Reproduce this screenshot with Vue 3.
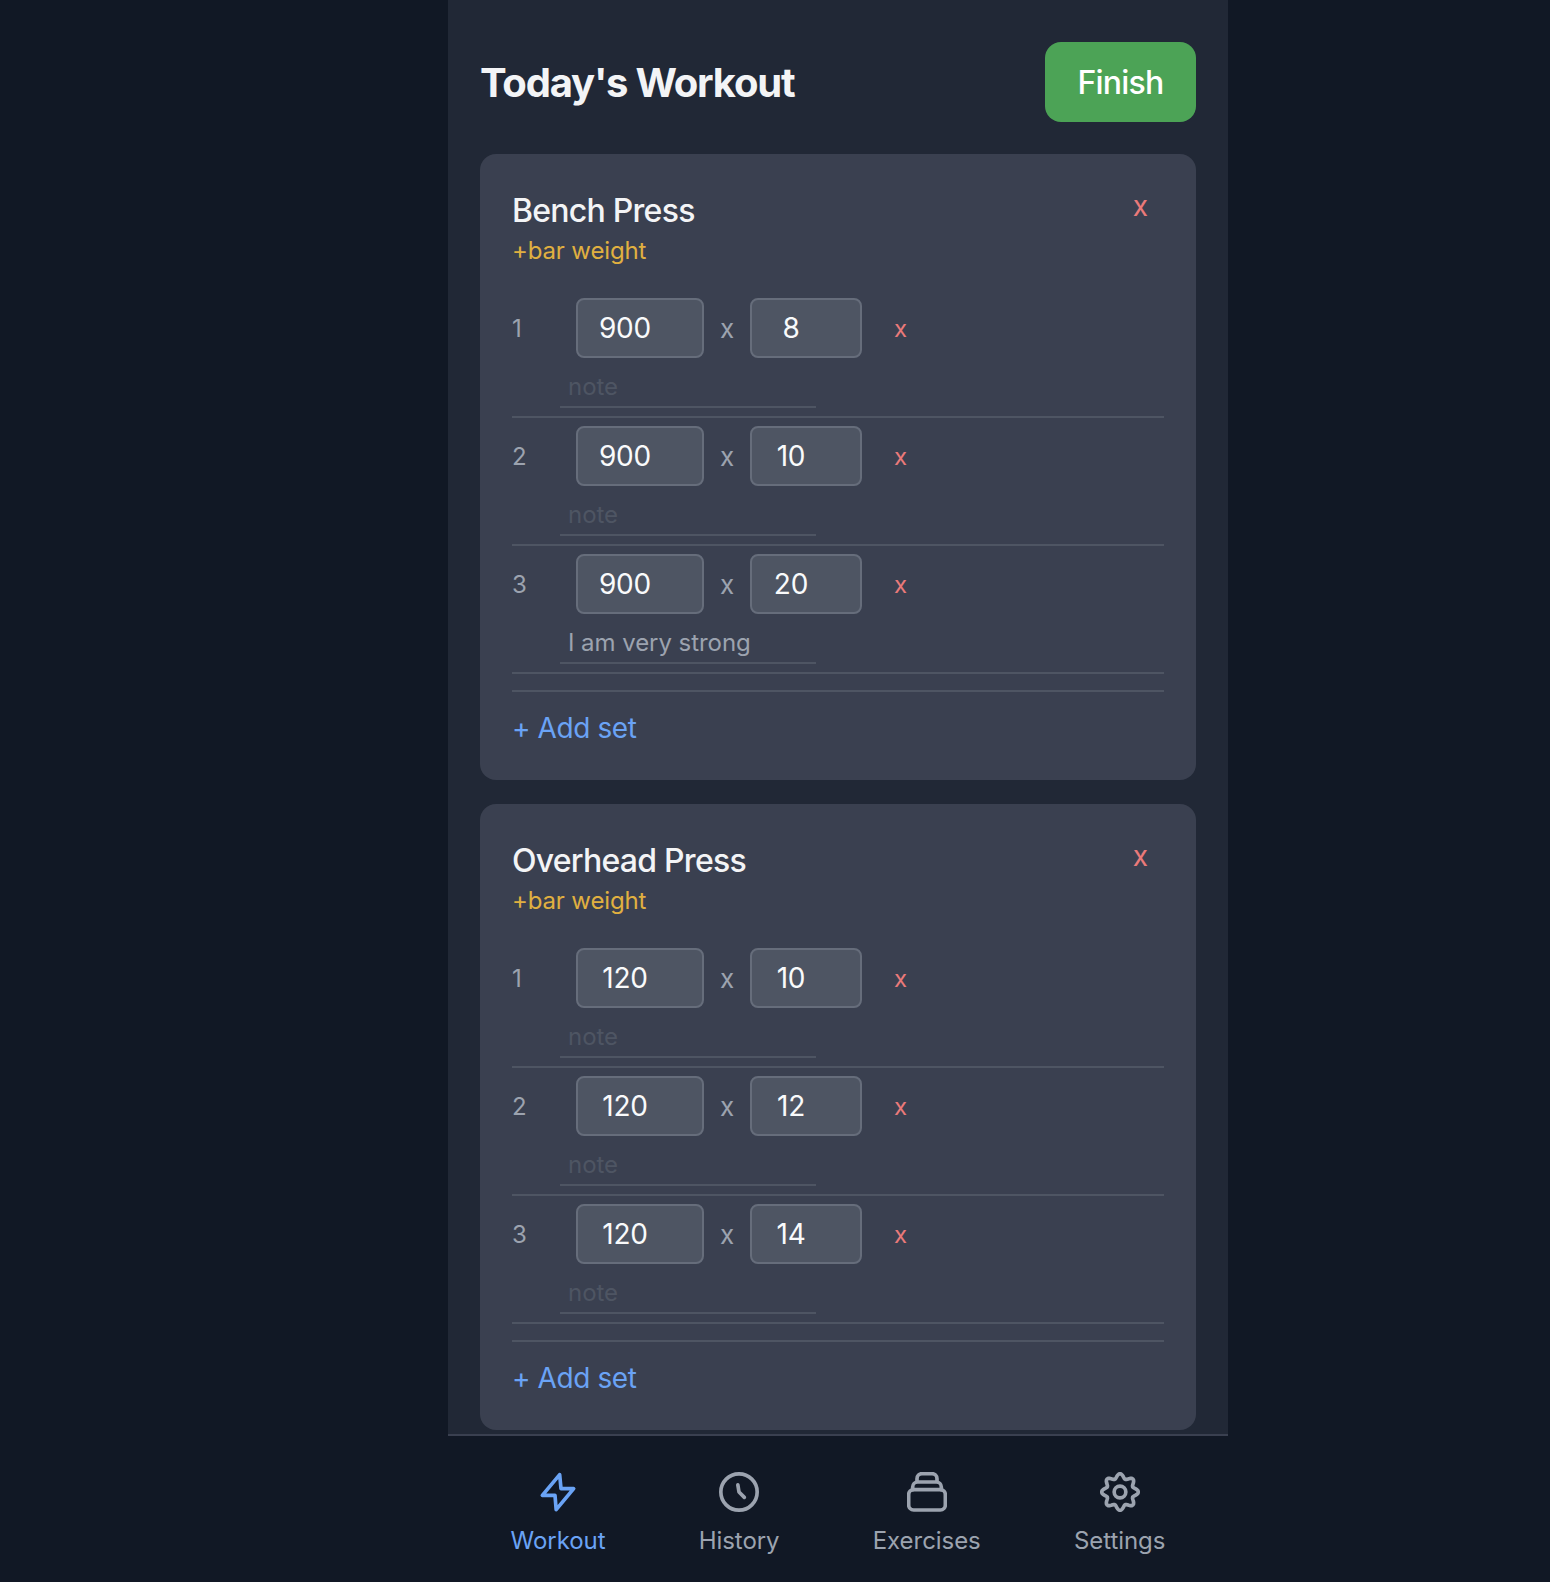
<script setup>
const exercises = [
  { name: 'Bench Press', sets: [
    { w: '900', r: '8', note: '' }, { w: '900', r: '10', note: '' }, { w: '900', r: '20', note: 'I am very strong' } ] },
  { name: 'Overhead Press', sets: [
    { w: '120', r: '10', note: '' }, { w: '120', r: '12', note: '' }, { w: '120', r: '14', note: '' } ] },
]
const gear = (() => {
  const pts = []
  for (let i = 0; i < 96; i++) {
    const t = (i / 96) * Math.PI * 2
    const r = 9.6 + 1.4 * Math.cos(8 * t)
    pts.push(`${(12 + r * Math.sin(t)).toFixed(2)} ${(12 - r * Math.cos(t)).toFixed(2)}`)
  }
  return 'M' + pts.join('L') + 'Z'
})()
</script>

<template>
  <div class="page">
    <div class="phone">
      <main class="content">
        <header class="head">
          <h1>Today's Workout</h1>
          <button class="finish">Finish</button>
        </header>
        <section v-for="ex in exercises" :key="ex.name" class="card">
          <div class="card-head">
            <div>
              <h2>{{ ex.name }}</h2>
              <div class="bar">+bar weight</div>
            </div>
            <button class="remove-ex">x</button>
          </div>
          <div v-for="(s, i) in ex.sets" :key="i" class="set">
            <div class="line">
              <span class="num">{{ i + 1 }}</span>
              <input class="field w" :value="s.w" />
              <span class="times">x</span>
              <input class="field r" :value="s.r" />
              <button class="remove-set">x</button>
            </div>
            <input class="note" placeholder="note" :value="s.note" />
          </div>
          <div class="add"><button class="add-btn">+ Add set</button></div>
        </section>
      </main>
      <nav class="nav">
        <a class="tab active">
          <svg viewBox="0 0 24 24" class="ico"><path d="M13 1.6 2.6 14h7.6l.7 8.6L21.4 10h-7.6z"/></svg>
          <span>Workout</span>
        </a>
        <a class="tab">
          <svg viewBox="0 0 24 24" class="ico"><circle cx="12" cy="12" r="10.9"/><path d="M11.3 7.7 12 12l3.2 3.2"/></svg>
          <span>History</span>
        </a>
        <a class="tab">
          <svg viewBox="0 0 24 24" class="ico"><rect x="1" y="10.6" width="22" height="12.2" rx="3"/><path d="M3.4 10.6V9a3 3 0 0 1 3-3h11.2a3 3 0 0 1 3 3v1.6M6 5.8V4a3 3 0 0 1 3-3h6a3 3 0 0 1 3 3v1.8"/></svg>
          <span>Exercises</span>
        </a>
        <a class="tab">
          <svg viewBox="0 0 24 24" class="ico"><circle cx="12" cy="12" r="3.5"/><path :d="gear"/></svg>
          <span>Settings</span>
        </a>
      </nav>
    </div>
  </div>
</template>

<style>
html, body { margin: 0; background: #111825; }
</style>

<style scoped>
.page { height: 100vh; display: flex; padding-left: 448px; background: #111825; font-family: Inter, "Liberation Sans", sans-serif; overflow: hidden; }
.phone { width: 780px; height: 100%; display: flex; flex-direction: column; background: #212836; }
.content { flex: 1; min-height: 0; overflow: hidden; padding: 42px 32px 0; }
.head { display: flex; justify-content: space-between; align-items: center; margin-bottom: 32px; }
h1 { margin: 0; font-size: 40px; font-weight: 750; letter-spacing: -1.2px; color: #f3f4f6; }
.finish { width: 151px; height: 80px; border: 0; border-radius: 16px; background: #4ca356; color: #fff; font: 550 32px Inter, sans-serif; letter-spacing: -0.8px; padding: 0; }
.card { background: #3a4050; border-radius: 16px; padding: 32px; margin-bottom: 24px; }
.card-head { display: flex; justify-content: space-between; align-items: flex-start; margin-bottom: 21px; }
h2 { margin: 3px 0 0; font-size: 32px; line-height: 44px; font-weight: 550; letter-spacing: -0.75px; color: #f3f4f6; }
.bar { font-size: 24px; line-height: 36px; letter-spacing: -0.15px; color: #e0b040; }
.remove-ex { background: none; border: 0; color: #ea7a7a; font: 400 28px Inter, sans-serif; padding: 0 16px; line-height: 40px; }
.set { border-bottom: 2px solid #4e5563; padding: 8px 0; }
.set:first-of-type { padding-top: 0; }
.line { display: flex; align-items: center; }
.num { width: 64px; font-size: 24px; color: #9ca3af; }
.field { box-sizing: border-box; height: 60px; border: 2px solid #666d7b; border-radius: 8px; background: #4e5563; color: #f9fafb; font: 400 28px Inter, sans-serif; letter-spacing: -0.2px; text-align: center; padding: 0 30px 0 0; outline: none; }
.w { width: 128px; }
.r { width: 112px; }
.times { width: 46px; text-align: center; font-size: 26px; color: #9ca3af; }
.remove-set { margin-left: 32px; background: none; border: 0; padding: 0; color: #ea7a7a; font: 400 24px Inter, sans-serif; }
.note { display: block; box-sizing: border-box; width: 256px; height: 50px; margin: 0 0 0 48px; padding: 8px 8px 0; background: none; border: 0; border-bottom: 2px solid #4e5563; color: #9ca3af; font: 400 24px Inter, sans-serif; letter-spacing: -0.05px; outline: none; }
.note::placeholder { color: #4e5563; opacity: 1; }
.add { border-top: 2px solid #4e5563; margin-top: 16px; padding-top: 16px; }
.add-btn { background: none; border: 0; padding: 0; color: #6aa3f5; font: 400 28px Inter, sans-serif; letter-spacing: -0.4px; line-height: 40px; }
.nav { flex: none; height: 148px; box-sizing: border-box; border-top: 2px solid #3a4050; background: #111825; padding: 10px 16px 0; display: flex; justify-content: space-around; align-items: center; }
.tab { display: flex; flex-direction: column; align-items: center; gap: 13px; color: #9ca3af; font-size: 24px; line-height: 32px; letter-spacing: -0.05px; }
.tab.active { color: #6aa3f5; }
.ico { width: 40px; height: 40px; fill: none; stroke: currentColor; stroke-width: 2.2; stroke-linecap: round; stroke-linejoin: round; }
</style>
